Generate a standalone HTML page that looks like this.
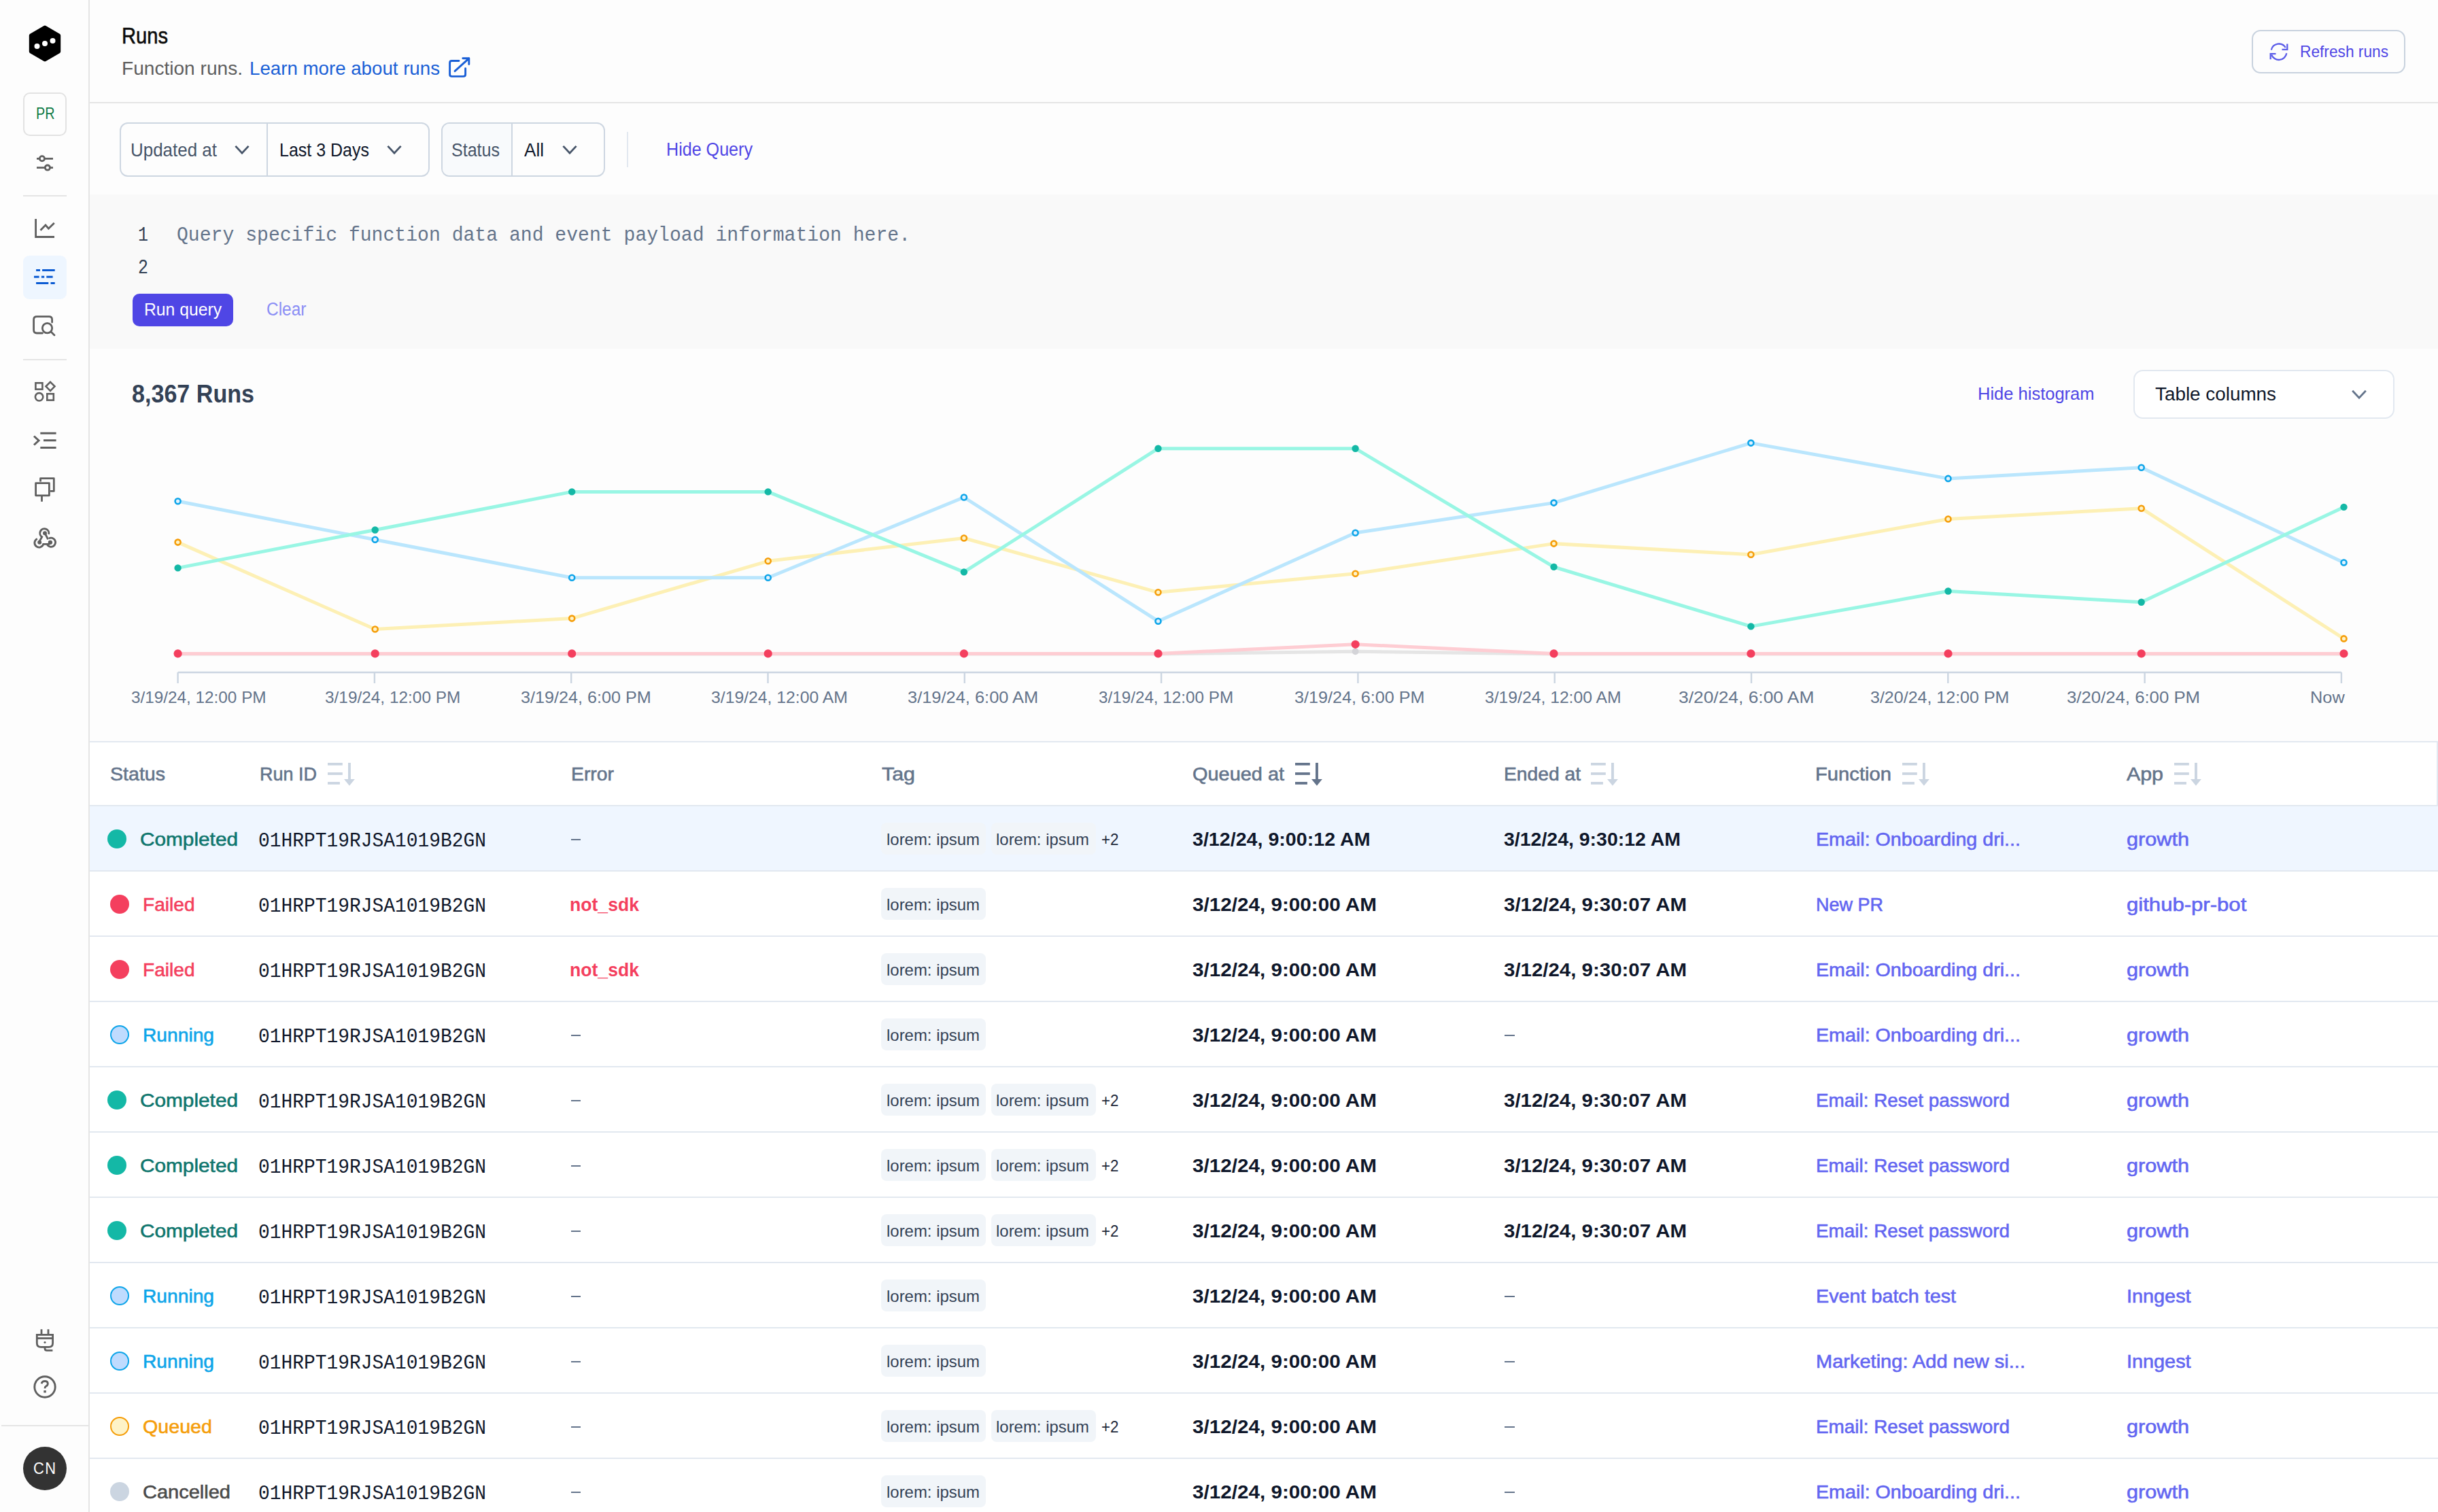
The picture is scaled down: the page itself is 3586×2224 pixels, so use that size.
<!DOCTYPE html>
<html><head><meta charset="utf-8"><title>Runs</title>
<style>
html,body{margin:0;padding:0;overflow:hidden;background:#fdfdfd;}
#root{position:absolute;left:0;top:0;width:3586px;height:2224px;overflow:hidden;background:#fdfdfd;font-family:'Liberation Sans', sans-serif;}
svg{overflow:visible;}
</style></head><body>
<div id="root">
<div style="position:absolute;left:0px;top:0px;width:130px;height:2224px;background:#fdfdfd;"></div>
<div style="position:absolute;left:130px;top:0px;width:2px;height:2224px;background:#e5e5e5;"></div>
<div style="position:absolute;left:132px;top:150px;width:3454px;height:2px;background:#e5e5e5;"></div>
<div style="position:absolute;left:132px;top:286px;width:3454px;height:227px;background:#f9f9f9;"></div>
<div style="position:absolute;left:132px;top:1092px;width:3454px;height:1132px;background:#ffffff;"></div>
<svg style="position:absolute;left:30px;top:30px;" width="72" height="72" viewBox="30 30 72 72"><path d="M66 40.6 L86.2 52.3 L86.2 75.7 L66 87.4 L45.8 75.7 L45.8 52.3 Z" fill="#000" stroke="#000" stroke-width="6" stroke-linejoin="round"/><circle cx="54.5" cy="68" r="4" fill="#fff"/><circle cx="66" cy="64" r="4" fill="#fff"/><circle cx="77.5" cy="60" r="4" fill="#fff"/></svg>
<div style="position:absolute;left:34px;top:136px;width:64px;height:64px;box-sizing:border-box;border:2px solid #e2e2e2;border-radius:10px;background:#fdfdfd;"></div>
<div id="t0" style="position:absolute;left:52.5px;top:155.3px;font-family:'Liberation Sans', sans-serif;font-size:24.5px;line-height:24.5px;color:#0f7b45;font-weight:400;white-space:pre;transform:scaleX(0.8077);transform-origin:0 0;">PR</div>
<svg style="position:absolute;left:40px;top:215px;" width="50" height="50" viewBox="40 215 50 50"><g stroke="#5f5f5f" stroke-width="2.8" fill="none"><path d="M54 233.3 H58.2 M65.6 233.3 H78"/><circle cx="61.9" cy="233.3" r="3.6"/><path d="M54 246.6 H66.2 M73.6 246.6 H78"/><circle cx="69.9" cy="246.6" r="3.6"/></g></svg>
<div style="position:absolute;left:34px;top:287px;width:64px;height:2px;background:#e5e5e5;"></div>
<svg style="position:absolute;left:40px;top:315px;" width="50" height="45" viewBox="40 315 50 45"><g stroke="#5f5f5f" stroke-width="2.8" fill="none"><path d="M52.6 322 V348.5 H80"/><path d="M59.5 338.8 L67 331 L71.4 336.2 L79.8 328"/></g></svg>
<div style="position:absolute;left:34px;top:376px;width:64px;height:64px;background:#eef6ff;border-radius:9px;"></div>
<svg style="position:absolute;left:40px;top:385px;" width="50" height="45" viewBox="40 385 50 45"><g stroke="#0b5bd3" stroke-width="2.9" fill="none"><path d="M53.1 397.5 H59 M62.1 397.5 H80.7"/><path d="M50 407.2 H57.6 M60.9 407.2 H65.2 M68.3 407.2 H77.6"/><path d="M53.1 416.5 H71.3 M74.5 416.5 H80.7"/></g></svg>
<svg style="position:absolute;left:40px;top:455px;" width="50" height="50" viewBox="40 455 50 50"><g stroke="#5f5f5f" stroke-width="2.8" fill="none" stroke-linecap="round"><path d="M62.5 490 H54 Q49.6 490 49.6 485.6 V469.9 Q49.6 465.6 54 465.6 H72.2 Q76.6 465.6 76.6 469.9 V474"/><circle cx="69.5" cy="482.6" r="7.2"/><path d="M75 488 L80 493"/></g></svg>
<div style="position:absolute;left:34px;top:528px;width:64px;height:2px;background:#e5e5e5;"></div>
<svg style="position:absolute;left:40px;top:550px;" width="50" height="50" viewBox="40 550 50 50"><g stroke="#5f5f5f" stroke-width="2.6" fill="none"><rect x="52.4" y="563.3" width="10" height="9.3"/><path d="M74 561.8 L80.5 568.3 L74 574.8 L67.5 568.3 Z"/><circle cx="57.6" cy="583.8" r="5.7"/><rect x="69.3" y="579.3" width="9.5" height="9.3"/></g></svg>
<svg style="position:absolute;left:40px;top:625px;" width="50" height="45" viewBox="40 625 50 45"><g stroke="#5f5f5f" stroke-width="3" fill="none"><path d="M50 641.5 L57 648 L50 654.5"/><path d="M59.3 637.2 H82.6 M64 647.8 H82.6 M59.3 658.4 H82.6"/></g></svg>
<svg style="position:absolute;left:40px;top:695px;" width="50" height="50" viewBox="40 695 50 50"><g stroke="#5f5f5f" stroke-width="2.8" fill="none" stroke-linejoin="round"><path d="M59.5 708.5 V703.7 H79.3 V722.4 H74"/><rect x="52.6" y="710.6" width="19.8" height="18.2"/><path d="M61.5 729 V737.8"/></g></svg>
<svg style="position:absolute;left:40px;top:765px;" width="55" height="50" viewBox="40 765 55 50"><g transform="translate(66 791.5) scale(0.9) translate(-66 -791.5)"><g stroke="#5f5f5f" stroke-width="3.2" fill="none"><path d="M72.3 785.2 A7.3 7.3 0 1 0 61.2 789.5 L56.5 798"/><path d="M53.6 792.6 A7.3 7.3 0 1 0 63.5 801.4 H74"/><path d="M66 783.4 L71.2 793.6"/><path d="M69.8 802.3 A7.3 7.3 0 1 0 72.6 792"/></g><g fill="#5f5f5f"><circle cx="66" cy="783.4" r="3.3"/><circle cx="57.3" cy="798.5" r="3.3"/><circle cx="74.8" cy="798.5" r="3.5"/></g></g></svg>
<svg style="position:absolute;left:40px;top:1945px;" width="50" height="50" viewBox="40 1945 50 50"><g stroke="#5f5f5f" stroke-width="2.8" fill="none"><path d="M61 1955.3 V1962.2 M71 1955.3 V1962.2"/><path d="M54.3 1963.4 H77.6 V1975.5 Q77.6 1981.4 71.7 1981.4 H60.2 Q54.3 1981.4 54.3 1975.5 Z"/><path d="M54.3 1968.5 H77.6"/><path d="M66 1981.4 V1983.5 Q66 1986.3 68.8 1986.3 H77.4"/></g><circle cx="66" cy="1974.5" r="1.6" fill="#5f5f5f"/></svg>
<svg style="position:absolute;left:40px;top:2015px;" width="55" height="55" viewBox="40 2015 55 55"><circle cx="66" cy="2040" r="15.2" stroke="#5f5f5f" stroke-width="2.9" fill="none"/><path d="M61.2 2035.2 Q61.8 2031.5 66 2031.5 Q70.3 2031.5 70.3 2035.2 Q70.3 2037.7 67.6 2039 Q66 2039.8 66 2042.2" stroke="#5f5f5f" stroke-width="2.9" fill="none"/><rect x="64.3" y="2045.2" width="3.5" height="3.3" fill="#5f5f5f"/></svg>
<div style="position:absolute;left:2px;top:2096px;width:128px;height:2px;background:#e5e5e5;"></div>
<div style="position:absolute;left:34px;top:2128px;width:64px;height:64px;background:#333;border-radius:50%;"></div>
<div id="t1" style="position:absolute;left:48.5px;top:2148.7px;font-family:'Liberation Sans', sans-serif;font-size:23px;line-height:23px;color:#fff;font-weight:400;white-space:pre;transform:scaleX(0.9521);transform-origin:0 0;letter-spacing:1.5px;">CN</div>
<div id="t2" style="position:absolute;left:179.0px;top:35.8px;font-family:'Liberation Sans', sans-serif;font-size:33px;line-height:33px;color:#0b0b0b;font-weight:400;white-space:pre;transform:scaleX(0.8826);transform-origin:0 0;-webkit-text-stroke:0.6px #0b0b0b;">Runs</div>
<div id="t3" style="position:absolute;left:179.0px;top:86.7px;font-family:'Liberation Sans', sans-serif;font-size:28px;line-height:28px;color:#5e5e5e;font-weight:400;white-space:pre;transform:scaleX(1.0033);transform-origin:0 0;">Function runs.</div>
<div id="t4" style="position:absolute;left:366.5px;top:86.7px;font-family:'Liberation Sans', sans-serif;font-size:28px;line-height:28px;color:#1a5fd6;font-weight:400;white-space:pre;transform:scaleX(0.9884);transform-origin:0 0;">Learn more about runs</div>
<svg style="position:absolute;left:655px;top:80px;" width="40" height="40" viewBox="655 80 40 40"><g stroke="#1a5fd6" stroke-width="2.9" fill="none" stroke-linecap="round" stroke-linejoin="round"><path d="M675 89.5 H664.5 Q661.6 89.5 661.6 92.4 V109.5 Q661.6 112.4 664.5 112.4 H681.6 Q684.6 112.4 684.6 109.5 V100.6"/><path d="M669 104.6 L689.8 85.8 M680.8 85.8 H689.8 V94.6"/></g></svg>
<div style="position:absolute;left:3312px;top:44px;width:226px;height:64px;box-sizing:border-box;border:2px solid #c8d2de;border-radius:13px;"></div>
<svg style="position:absolute;left:3330px;top:55px;" width="45" height="45" viewBox="3330 55 45 45"><g stroke="#5b5ce8" stroke-width="2.3" fill="none"><path d="M3340.8 73.5 A11.5 11.5 0 0 1 3361.8 70"/><path d="M3363.3 78.3 A11.5 11.5 0 0 1 3341.2 80.6"/><path d="M3356.5 72.9 H3364.3 V64.6"/><path d="M3347.5 79.2 H3339.7 V87.2"/></g></svg>
<div id="t5" style="position:absolute;left:3382.5px;top:63.5px;font-family:'Liberation Sans', sans-serif;font-size:24px;line-height:24px;color:#4f46e5;font-weight:400;white-space:pre;transform:scaleX(0.9462);transform-origin:0 0;">Refresh runs</div>
<div style="position:absolute;left:176px;top:180px;width:456px;height:80px;box-sizing:border-box;border:2px solid #cdd6e1;border-radius:12px;"></div>
<div style="position:absolute;left:392px;top:182px;width:2px;height:76px;background:#cdd6e1;"></div>
<div id="t6" style="position:absolute;left:192.0px;top:207.3px;font-family:'Liberation Sans', sans-serif;font-size:28px;line-height:28px;color:#475569;font-weight:400;white-space:pre;transform:scaleX(0.9270);transform-origin:0 0;">Updated at</div>
<svg style="position:absolute;left:342.3px;top:208.2px;" width="28" height="24" viewBox="342.3 208.2 28 24"><path d="M346.7 215.1 L356.3 225.3 L365.9 215.1" stroke="#475569" stroke-width="2.8" fill="none"/></svg>
<div id="t7" style="position:absolute;left:410.5px;top:207.3px;font-family:'Liberation Sans', sans-serif;font-size:28px;line-height:28px;color:#0f172a;font-weight:400;white-space:pre;transform:scaleX(0.8927);transform-origin:0 0;">Last 3 Days</div>
<svg style="position:absolute;left:566px;top:208.2px;" width="28" height="24" viewBox="566 208.2 28 24"><path d="M570.4 215.1 L580.0 225.3 L589.6 215.1" stroke="#475569" stroke-width="2.8" fill="none"/></svg>
<div style="position:absolute;left:649px;top:180px;width:241px;height:80px;box-sizing:border-box;border:2px solid #cdd6e1;border-radius:12px;overflow:hidden;"></div>
<div style="position:absolute;left:651px;top:182px;width:102px;height:76px;background:#f8fafc;border-radius:10px 0 0 10px;"></div>
<div style="position:absolute;left:752px;top:182px;width:2px;height:76px;background:#cdd6e1;"></div>
<div id="t8" style="position:absolute;left:664.0px;top:207.3px;font-family:'Liberation Sans', sans-serif;font-size:28px;line-height:28px;color:#475569;font-weight:400;white-space:pre;transform:scaleX(0.8943);transform-origin:0 0;">Status</div>
<div id="t9" style="position:absolute;left:770.5px;top:207.3px;font-family:'Liberation Sans', sans-serif;font-size:28px;line-height:28px;color:#0f172a;font-weight:400;white-space:pre;transform:scaleX(0.9317);transform-origin:0 0;">All</div>
<svg style="position:absolute;left:824px;top:208.2px;" width="28" height="24" viewBox="824 208.2 28 24"><path d="M828.4 215.1 L838.0 225.3 L847.6 215.1" stroke="#475569" stroke-width="2.8" fill="none"/></svg>
<div style="position:absolute;left:922px;top:194px;width:2px;height:52px;background:#e2e8f0;"></div>
<div id="t10" style="position:absolute;left:979.5px;top:206.8px;font-family:'Liberation Sans', sans-serif;font-size:27px;line-height:27px;color:#5046e5;font-weight:400;white-space:pre;transform:scaleX(0.9300);transform-origin:0 0;">Hide Query</div>
<div id="t11" style="position:absolute;left:203.0px;top:331.0px;font-family:'Liberation Mono', monospace;font-size:30px;line-height:30px;color:#334155;font-weight:400;white-space:pre;transform:scaleX(0.8326);transform-origin:0 0;">1</div>
<div id="t12" style="position:absolute;left:259.5px;top:331.0px;font-family:'Liberation Mono', monospace;font-size:30px;line-height:30px;color:#64748b;font-weight:400;white-space:pre;transform:scaleX(0.9365);transform-origin:0 0;">Query specific function data and event payload information here.</div>
<div id="t13" style="position:absolute;left:203.0px;top:379.3px;font-family:'Liberation Mono', monospace;font-size:30px;line-height:30px;color:#334155;font-weight:400;white-space:pre;transform:scaleX(0.8326);transform-origin:0 0;">2</div>
<div style="position:absolute;left:195px;top:432px;width:148px;height:48px;background:#4f46e5;border-radius:10px;"></div>
<div id="t14" style="position:absolute;left:212.0px;top:442.2px;font-family:'Liberation Sans', sans-serif;font-size:26px;line-height:26px;color:#ffffff;font-weight:400;white-space:pre;transform:scaleX(0.9502);transform-origin:0 0;">Run query</div>
<div id="t15" style="position:absolute;left:392.0px;top:441.8px;font-family:'Liberation Sans', sans-serif;font-size:27px;line-height:27px;color:#8b8ff5;font-weight:400;white-space:pre;transform:scaleX(0.9065);transform-origin:0 0;">Clear</div>
<div id="t16" style="position:absolute;left:194.0px;top:561.3px;font-family:'Liberation Sans', sans-serif;font-size:37px;line-height:37px;color:#334155;font-weight:700;white-space:pre;transform:scaleX(0.9213);transform-origin:0 0;">8,367 Runs</div>
<div id="t17" style="position:absolute;left:2909.0px;top:566.4px;font-family:'Liberation Sans', sans-serif;font-size:26px;line-height:26px;color:#4f46e5;font-weight:400;white-space:pre;transform:scaleX(0.9808);transform-origin:0 0;">Hide histogram</div>
<div style="position:absolute;left:3138px;top:544px;width:384px;height:72px;box-sizing:border-box;border:2px solid #e2e8f0;border-radius:14px;background:#fff;"></div>
<div id="t18" style="position:absolute;left:3169.5px;top:567.4px;font-family:'Liberation Sans', sans-serif;font-size:27px;line-height:27px;color:#0f172a;font-weight:400;white-space:pre;transform:scaleX(1.0313);transform-origin:0 0;">Table columns</div>
<svg style="position:absolute;left:3455.5px;top:568px;" width="28" height="24" viewBox="3455.5 568 28 24"><path d="M3459.7 574.8 L3469.5 585.2 L3479.3 574.8" stroke="#64748b" stroke-width="2.8" fill="none"/></svg>
<svg style="position:absolute;left:200px;top:600px;" width="3300" height="420" viewBox="200 600 3300 420"><path d="M261.6 989 H3444" stroke="#cbd5e1" stroke-width="2.4" fill="none"/><path d="M261.6 989 V1005" stroke="#cbd5e1" stroke-width="2.4"/><path d="M550.9 989 V1005" stroke="#cbd5e1" stroke-width="2.4"/><path d="M840.2 989 V1005" stroke="#cbd5e1" stroke-width="2.4"/><path d="M1129.5 989 V1005" stroke="#cbd5e1" stroke-width="2.4"/><path d="M1418.8 989 V1005" stroke="#cbd5e1" stroke-width="2.4"/><path d="M1708.1 989 V1005" stroke="#cbd5e1" stroke-width="2.4"/><path d="M1997.4 989 V1005" stroke="#cbd5e1" stroke-width="2.4"/><path d="M2286.7 989 V1005" stroke="#cbd5e1" stroke-width="2.4"/><path d="M2576.0 989 V1005" stroke="#cbd5e1" stroke-width="2.4"/><path d="M2865.3 989 V1005" stroke="#cbd5e1" stroke-width="2.4"/><path d="M3154.6 989 V1005" stroke="#cbd5e1" stroke-width="2.4"/><path d="M3443.9 989 V1005" stroke="#cbd5e1" stroke-width="2.4"/><polyline points="261.6,962.0 551.7,962.0 841.2,962.0 1129.7,962.0 1417.9,962.0 1703.5,962.0 1993.6,958.3 2285.5,962.0 2575.4,962.0 2865.5,962.0 3149.7,962.0 3447.5,962.0" stroke="#e5e5e5" stroke-width="5" fill="none" stroke-linejoin="round"/><polyline points="261.6,961.4 551.7,961.4 841.2,961.4 1129.7,961.4 1417.9,961.4 1703.5,961.4 1993.6,947.8 2285.5,961.4 2575.4,961.4 2865.5,961.4 3149.7,961.4 3447.5,961.4" stroke="#fecdd3" stroke-width="5" fill="none" stroke-linejoin="round"/><polyline points="261.6,797.6 551.7,925.5 841.2,909.6 1129.7,825.3 1417.9,791.5 1703.5,871.3 1993.6,843.8 2285.5,799.6 2575.4,815.8 2865.5,763.5 3149.7,747.7 3447.5,939.4" stroke="#fdf0b5" stroke-width="5" fill="none" stroke-linejoin="round"/><polyline points="261.6,737.3 551.7,793.8 841.2,849.8 1129.7,849.8 1417.9,731.5 1703.5,913.7 1993.6,783.8 2285.5,739.6 2575.4,651.6 2865.5,703.9 3149.7,687.7 3447.5,827.5" stroke="#bae6fd" stroke-width="5" fill="none" stroke-linejoin="round"/><polyline points="261.6,835.4 551.7,779.5 841.2,723.4 1129.7,723.4 1417.9,841.4 1703.5,659.7 1993.6,659.7 2285.5,833.9 2575.4,921.4 2865.5,869.5 3149.7,885.7 3447.5,745.9" stroke="#99f6e4" stroke-width="5" fill="none" stroke-linejoin="round"/><circle cx="261.6" cy="962.0" r="4.9" fill="#d4d4d8"/><circle cx="551.7" cy="962.0" r="4.9" fill="#d4d4d8"/><circle cx="841.2" cy="962.0" r="4.9" fill="#d4d4d8"/><circle cx="1129.7" cy="962.0" r="4.9" fill="#d4d4d8"/><circle cx="1417.9" cy="962.0" r="4.9" fill="#d4d4d8"/><circle cx="1703.5" cy="962.0" r="4.9" fill="#d4d4d8"/><circle cx="1993.6" cy="958.3" r="4.9" fill="#d4d4d8"/><circle cx="2285.5" cy="962.0" r="4.9" fill="#d4d4d8"/><circle cx="2575.4" cy="962.0" r="4.9" fill="#d4d4d8"/><circle cx="2865.5" cy="962.0" r="4.9" fill="#d4d4d8"/><circle cx="3149.7" cy="962.0" r="4.9" fill="#d4d4d8"/><circle cx="3447.5" cy="962.0" r="4.9" fill="#d4d4d8"/><circle cx="261.6" cy="961.4" r="6.1" fill="#f43f5e"/><circle cx="551.7" cy="961.4" r="6.1" fill="#f43f5e"/><circle cx="841.2" cy="961.4" r="6.1" fill="#f43f5e"/><circle cx="1129.7" cy="961.4" r="6.1" fill="#f43f5e"/><circle cx="1417.9" cy="961.4" r="6.1" fill="#f43f5e"/><circle cx="1703.5" cy="961.4" r="6.1" fill="#f43f5e"/><circle cx="1993.6" cy="947.8" r="6.1" fill="#f43f5e"/><circle cx="2285.5" cy="961.4" r="6.1" fill="#f43f5e"/><circle cx="2575.4" cy="961.4" r="6.1" fill="#f43f5e"/><circle cx="2865.5" cy="961.4" r="6.1" fill="#f43f5e"/><circle cx="3149.7" cy="961.4" r="6.1" fill="#f43f5e"/><circle cx="3447.5" cy="961.4" r="6.1" fill="#f43f5e"/><circle cx="261.6" cy="797.6" r="4.0" fill="#fef3c7" stroke="#f59e0b" stroke-width="2.6"/><circle cx="551.7" cy="925.5" r="4.0" fill="#fef3c7" stroke="#f59e0b" stroke-width="2.6"/><circle cx="841.2" cy="909.6" r="4.0" fill="#fef3c7" stroke="#f59e0b" stroke-width="2.6"/><circle cx="1129.7" cy="825.3" r="4.0" fill="#fef3c7" stroke="#f59e0b" stroke-width="2.6"/><circle cx="1417.9" cy="791.5" r="4.0" fill="#fef3c7" stroke="#f59e0b" stroke-width="2.6"/><circle cx="1703.5" cy="871.3" r="4.0" fill="#fef3c7" stroke="#f59e0b" stroke-width="2.6"/><circle cx="1993.6" cy="843.8" r="4.0" fill="#fef3c7" stroke="#f59e0b" stroke-width="2.6"/><circle cx="2285.5" cy="799.6" r="4.0" fill="#fef3c7" stroke="#f59e0b" stroke-width="2.6"/><circle cx="2575.4" cy="815.8" r="4.0" fill="#fef3c7" stroke="#f59e0b" stroke-width="2.6"/><circle cx="2865.5" cy="763.5" r="4.0" fill="#fef3c7" stroke="#f59e0b" stroke-width="2.6"/><circle cx="3149.7" cy="747.7" r="4.0" fill="#fef3c7" stroke="#f59e0b" stroke-width="2.6"/><circle cx="3447.5" cy="939.4" r="4.0" fill="#fef3c7" stroke="#f59e0b" stroke-width="2.6"/><circle cx="261.6" cy="737.3" r="4.0" fill="#e0f2fe" stroke="#0ea5e9" stroke-width="2.6"/><circle cx="551.7" cy="793.8" r="4.0" fill="#e0f2fe" stroke="#0ea5e9" stroke-width="2.6"/><circle cx="841.2" cy="849.8" r="4.0" fill="#e0f2fe" stroke="#0ea5e9" stroke-width="2.6"/><circle cx="1129.7" cy="849.8" r="4.0" fill="#e0f2fe" stroke="#0ea5e9" stroke-width="2.6"/><circle cx="1417.9" cy="731.5" r="4.0" fill="#e0f2fe" stroke="#0ea5e9" stroke-width="2.6"/><circle cx="1703.5" cy="913.7" r="4.0" fill="#e0f2fe" stroke="#0ea5e9" stroke-width="2.6"/><circle cx="1993.6" cy="783.8" r="4.0" fill="#e0f2fe" stroke="#0ea5e9" stroke-width="2.6"/><circle cx="2285.5" cy="739.6" r="4.0" fill="#e0f2fe" stroke="#0ea5e9" stroke-width="2.6"/><circle cx="2575.4" cy="651.6" r="4.0" fill="#e0f2fe" stroke="#0ea5e9" stroke-width="2.6"/><circle cx="2865.5" cy="703.9" r="4.0" fill="#e0f2fe" stroke="#0ea5e9" stroke-width="2.6"/><circle cx="3149.7" cy="687.7" r="4.0" fill="#e0f2fe" stroke="#0ea5e9" stroke-width="2.6"/><circle cx="3447.5" cy="827.5" r="4.0" fill="#e0f2fe" stroke="#0ea5e9" stroke-width="2.6"/><circle cx="261.6" cy="835.4" r="5.2" fill="#14b8a6"/><circle cx="551.7" cy="779.5" r="5.2" fill="#14b8a6"/><circle cx="841.2" cy="723.4" r="5.2" fill="#14b8a6"/><circle cx="1129.7" cy="723.4" r="5.2" fill="#14b8a6"/><circle cx="1417.9" cy="841.4" r="5.2" fill="#14b8a6"/><circle cx="1703.5" cy="659.7" r="5.2" fill="#14b8a6"/><circle cx="1993.6" cy="659.7" r="5.2" fill="#14b8a6"/><circle cx="2285.5" cy="833.9" r="5.2" fill="#14b8a6"/><circle cx="2575.4" cy="921.4" r="5.2" fill="#14b8a6"/><circle cx="2865.5" cy="869.5" r="5.2" fill="#14b8a6"/><circle cx="3149.7" cy="885.7" r="5.2" fill="#14b8a6"/><circle cx="3447.5" cy="745.9" r="5.2" fill="#14b8a6"/></svg>
<div id="t19" style="position:absolute;left:193.4px;top:1013.9px;font-family:'Liberation Sans', sans-serif;font-size:24px;line-height:24px;color:#64748b;font-weight:400;white-space:pre;transform:scaleX(1.0125);transform-origin:0 0;">3/19/24, 12:00 PM</div>
<div id="t20" style="position:absolute;left:477.7px;top:1013.9px;font-family:'Liberation Sans', sans-serif;font-size:24px;line-height:24px;color:#64748b;font-weight:400;white-space:pre;transform:scaleX(1.0161);transform-origin:0 0;">3/19/24, 12:00 PM</div>
<div id="t21" style="position:absolute;left:765.7px;top:1013.9px;font-family:'Liberation Sans', sans-serif;font-size:24px;line-height:24px;color:#64748b;font-weight:400;white-space:pre;transform:scaleX(1.0493);transform-origin:0 0;">3/19/24, 6:00 PM</div>
<div id="t22" style="position:absolute;left:1045.7px;top:1013.9px;font-family:'Liberation Sans', sans-serif;font-size:24px;line-height:24px;color:#64748b;font-weight:400;white-space:pre;transform:scaleX(1.0312);transform-origin:0 0;">3/19/24, 12:00 AM</div>
<div id="t23" style="position:absolute;left:1334.7px;top:1013.9px;font-family:'Liberation Sans', sans-serif;font-size:24px;line-height:24px;color:#64748b;font-weight:400;white-space:pre;transform:scaleX(1.0591);transform-origin:0 0;">3/19/24, 6:00 AM</div>
<div id="t24" style="position:absolute;left:1615.9px;top:1013.9px;font-family:'Liberation Sans', sans-serif;font-size:24px;line-height:24px;color:#64748b;font-weight:400;white-space:pre;transform:scaleX(1.0100);transform-origin:0 0;">3/19/24, 12:00 PM</div>
<div id="t25" style="position:absolute;left:1903.7px;top:1013.9px;font-family:'Liberation Sans', sans-serif;font-size:24px;line-height:24px;color:#64748b;font-weight:400;white-space:pre;transform:scaleX(1.0476);transform-origin:0 0;">3/19/24, 6:00 PM</div>
<div id="t26" style="position:absolute;left:2184.4px;top:1013.9px;font-family:'Liberation Sans', sans-serif;font-size:24px;line-height:24px;color:#64748b;font-weight:400;white-space:pre;transform:scaleX(1.0292);transform-origin:0 0;">3/19/24, 12:00 AM</div>
<div id="t27" style="position:absolute;left:2469.0px;top:1013.9px;font-family:'Liberation Sans', sans-serif;font-size:24px;line-height:24px;color:#64748b;font-weight:400;white-space:pre;transform:scaleX(1.0988);transform-origin:0 0;">3/20/24, 6:00 AM</div>
<div id="t28" style="position:absolute;left:2751.0px;top:1013.9px;font-family:'Liberation Sans', sans-serif;font-size:24px;line-height:24px;color:#64748b;font-weight:400;white-space:pre;transform:scaleX(1.0421);transform-origin:0 0;">3/20/24, 12:00 PM</div>
<div id="t29" style="position:absolute;left:3040.0px;top:1013.9px;font-family:'Liberation Sans', sans-serif;font-size:24px;line-height:24px;color:#64748b;font-weight:400;white-space:pre;transform:scaleX(1.0722);transform-origin:0 0;">3/20/24, 6:00 PM</div>
<div id="t30" style="position:absolute;left:3397.8px;top:1013.9px;font-family:'Liberation Sans', sans-serif;font-size:24px;line-height:24px;color:#64748b;font-weight:400;white-space:pre;transform:scaleX(1.0559);transform-origin:0 0;">Now</div>
<div style="position:absolute;left:132px;top:1090px;width:3454px;height:2px;background:#e2e8f0;"></div>
<div style="position:absolute;left:132px;top:1184px;width:3454px;height:2px;background:#e2e8f0;"></div>
<div style="position:absolute;left:3584px;top:1090px;width:2px;height:96px;background:#e2e8f0;"></div>
<div id="t31" style="position:absolute;left:161.5px;top:1124.8px;font-family:'Liberation Sans', sans-serif;font-size:28px;line-height:28px;color:#64748b;font-weight:400;white-space:pre;transform:scaleX(1.0203);transform-origin:0 0;-webkit-text-stroke:0.6px #64748b;">Status</div>
<div id="t32" style="position:absolute;left:382.0px;top:1124.8px;font-family:'Liberation Sans', sans-serif;font-size:28px;line-height:28px;color:#64748b;font-weight:400;white-space:pre;transform:scaleX(0.9638);transform-origin:0 0;-webkit-text-stroke:0.6px #64748b;">Run ID</div>
<div id="t33" style="position:absolute;left:839.5px;top:1124.8px;font-family:'Liberation Sans', sans-serif;font-size:28px;line-height:28px;color:#64748b;font-weight:400;white-space:pre;transform:scaleX(1.0123);transform-origin:0 0;-webkit-text-stroke:0.6px #64748b;">Error</div>
<div id="t34" style="position:absolute;left:1296.5px;top:1124.8px;font-family:'Liberation Sans', sans-serif;font-size:28px;line-height:28px;color:#64748b;font-weight:400;white-space:pre;transform:scaleX(1.0851);transform-origin:0 0;-webkit-text-stroke:0.6px #64748b;">Tag</div>
<div id="t35" style="position:absolute;left:1754.0px;top:1124.8px;font-family:'Liberation Sans', sans-serif;font-size:28px;line-height:28px;color:#64748b;font-weight:400;white-space:pre;transform:scaleX(1.0323);transform-origin:0 0;-webkit-text-stroke:0.6px #64748b;">Queued at</div>
<div id="t36" style="position:absolute;left:2212.0px;top:1124.8px;font-family:'Liberation Sans', sans-serif;font-size:28px;line-height:28px;color:#64748b;font-weight:400;white-space:pre;transform:scaleX(1.0079);transform-origin:0 0;-webkit-text-stroke:0.6px #64748b;">Ended at</div>
<div id="t37" style="position:absolute;left:2670.0px;top:1124.8px;font-family:'Liberation Sans', sans-serif;font-size:28px;line-height:28px;color:#64748b;font-weight:400;white-space:pre;transform:scaleX(1.0428);transform-origin:0 0;-webkit-text-stroke:0.6px #64748b;">Function</div>
<div id="t38" style="position:absolute;left:3127.5px;top:1124.8px;font-family:'Liberation Sans', sans-serif;font-size:28px;line-height:28px;color:#64748b;font-weight:400;white-space:pre;transform:scaleX(1.0837);transform-origin:0 0;-webkit-text-stroke:0.6px #64748b;">App</div>
<svg style="position:absolute;left:477px;top:1115px;" width="50" height="46" viewBox="477 1115 50 46"><g fill="#cbd5e1"><rect x="482" y="1122" width="21.8" height="3.8"/><rect x="482" y="1136.1" width="21.8" height="3.8"/><rect x="482" y="1150.1" width="17.9" height="3.8"/><rect x="512" y="1122" width="3.9" height="25"/><path d="M506 1146 H521.9 L513.95 1155.7 Z"/></g></svg>
<svg style="position:absolute;left:1900px;top:1115px;" width="50" height="46" viewBox="1900 1115 50 46"><g fill="#64748b"><rect x="1905" y="1122" width="21.8" height="3.8"/><rect x="1905" y="1136.1" width="21.8" height="3.8"/><rect x="1905" y="1150.1" width="17.9" height="3.8"/><rect x="1935" y="1122" width="3.9" height="25"/><path d="M1929 1146 H1944.9 L1936.95 1155.7 Z"/></g></svg>
<svg style="position:absolute;left:2335px;top:1115px;" width="50" height="46" viewBox="2335 1115 50 46"><g fill="#cbd5e1"><rect x="2340" y="1122" width="21.8" height="3.8"/><rect x="2340" y="1136.1" width="21.8" height="3.8"/><rect x="2340" y="1150.1" width="17.9" height="3.8"/><rect x="2370" y="1122" width="3.9" height="25"/><path d="M2364 1146 H2379.9 L2371.95 1155.7 Z"/></g></svg>
<svg style="position:absolute;left:2793px;top:1115px;" width="50" height="46" viewBox="2793 1115 50 46"><g fill="#cbd5e1"><rect x="2798" y="1122" width="21.8" height="3.8"/><rect x="2798" y="1136.1" width="21.8" height="3.8"/><rect x="2798" y="1150.1" width="17.9" height="3.8"/><rect x="2828" y="1122" width="3.9" height="25"/><path d="M2822 1146 H2837.9 L2829.95 1155.7 Z"/></g></svg>
<svg style="position:absolute;left:3193px;top:1115px;" width="50" height="46" viewBox="3193 1115 50 46"><g fill="#cbd5e1"><rect x="3198" y="1122" width="21.8" height="3.8"/><rect x="3198" y="1136.1" width="21.8" height="3.8"/><rect x="3198" y="1150.1" width="17.9" height="3.8"/><rect x="3228" y="1122" width="3.9" height="25"/><path d="M3222 1146 H3237.9 L3229.95 1155.7 Z"/></g></svg>
<div style="position:absolute;left:132px;top:1186px;width:3454px;height:94px;background:#eff6ff;"></div>
<div style="position:absolute;left:132px;top:1280px;width:3454px;height:2px;background:#e2e8f0;"></div>
<div style="position:absolute;left:158px;top:1220.0px;width:28px;height:28px;border-radius:50%;background:#14b8a6;"></div>
<div id="t39" style="position:absolute;left:205.6px;top:1220.8px;font-family:'Liberation Sans', sans-serif;font-size:28px;line-height:28px;color:#0f766e;font-weight:400;white-space:pre;transform:scaleX(1.0635);transform-origin:0 0;-webkit-text-stroke:0.6px #0f766e;">Completed</div>
<div id="t40" style="position:absolute;left:380.0px;top:1221.5px;font-family:'Liberation Mono', monospace;font-size:30px;line-height:30px;color:#0f172a;font-weight:400;white-space:pre;transform:scaleX(0.9304);transform-origin:0 0;">01HRPT19RJSA1019B2GN</div>
<div style="position:absolute;left:839.6px;top:1233.5px;width:14.8px;height:2.6px;background:#64748b;"></div>
<div style="position:absolute;left:1296.4px;top:1209.9px;width:153.3px;height:47.6px;background:#f1f5f9;border-radius:8px;"></div>
<div id="t41" style="position:absolute;left:1304.0px;top:1222.7px;font-family:'Liberation Sans', sans-serif;font-size:24px;line-height:24px;color:#334155;font-weight:400;white-space:pre;transform:scaleX(0.9973);transform-origin:0 0;">lorem: ipsum</div>
<div style="position:absolute;left:1458px;top:1209.9px;width:153.6px;height:47.6px;background:#f1f5f9;border-radius:8px;"></div>
<div id="t42" style="position:absolute;left:1465.4px;top:1222.7px;font-family:'Liberation Sans', sans-serif;font-size:24px;line-height:24px;color:#334155;font-weight:400;white-space:pre;transform:scaleX(0.9973);transform-origin:0 0;">lorem: ipsum</div>
<div id="t43" style="position:absolute;left:1619.5px;top:1222.7px;font-family:'Liberation Sans', sans-serif;font-size:24px;line-height:24px;color:#1e293b;font-weight:400;white-space:pre;transform:scaleX(0.9315);transform-origin:0 0;">+2</div>
<div id="t44" style="position:absolute;left:1754.0px;top:1220.8px;font-family:'Liberation Sans', sans-serif;font-size:28px;line-height:28px;color:#0f172a;font-weight:700;white-space:pre;transform:scaleX(1.0224);transform-origin:0 0;">3/12/24, 9:00:12 AM</div>
<div id="t45" style="position:absolute;left:2212.0px;top:1220.8px;font-family:'Liberation Sans', sans-serif;font-size:28px;line-height:28px;color:#0f172a;font-weight:700;white-space:pre;transform:scaleX(1.0165);transform-origin:0 0;">3/12/24, 9:30:12 AM</div>
<div id="t46" style="position:absolute;left:2670.7px;top:1220.8px;font-family:'Liberation Sans', sans-serif;font-size:28px;line-height:28px;color:#6366f1;font-weight:400;white-space:pre;transform:scaleX(1.0233);transform-origin:0 0;-webkit-text-stroke:0.6px #6366f1;">Email: Onboarding dri...</div>
<div id="t47" style="position:absolute;left:3128.0px;top:1220.8px;font-family:'Liberation Sans', sans-serif;font-size:28px;line-height:28px;color:#6366f1;font-weight:400;white-space:pre;transform:scaleX(1.0946);transform-origin:0 0;-webkit-text-stroke:0.6px #6366f1;">growth</div>
<div style="position:absolute;left:132px;top:1376px;width:3454px;height:2px;background:#e2e8f0;"></div>
<div style="position:absolute;left:162px;top:1316.0px;width:28px;height:28px;border-radius:50%;background:#f43f5e;"></div>
<div id="t48" style="position:absolute;left:210.2px;top:1316.8px;font-family:'Liberation Sans', sans-serif;font-size:28px;line-height:28px;color:#f43f5e;font-weight:400;white-space:pre;transform:scaleX(1.0031);transform-origin:0 0;-webkit-text-stroke:0.6px #f43f5e;">Failed</div>
<div id="t49" style="position:absolute;left:380.0px;top:1317.5px;font-family:'Liberation Mono', monospace;font-size:30px;line-height:30px;color:#0f172a;font-weight:400;white-space:pre;transform:scaleX(0.9304);transform-origin:0 0;">01HRPT19RJSA1019B2GN</div>
<div id="t50" style="position:absolute;left:837.5px;top:1316.8px;font-family:'Liberation Sans', sans-serif;font-size:28px;line-height:28px;color:#f43f5e;font-weight:700;white-space:pre;transform:scaleX(0.9501);transform-origin:0 0;">not_sdk</div>
<div style="position:absolute;left:1296.4px;top:1305.9px;width:153.3px;height:47.6px;background:#f1f5f9;border-radius:8px;"></div>
<div id="t51" style="position:absolute;left:1304.0px;top:1318.7px;font-family:'Liberation Sans', sans-serif;font-size:24px;line-height:24px;color:#334155;font-weight:400;white-space:pre;transform:scaleX(0.9973);transform-origin:0 0;">lorem: ipsum</div>
<div id="t52" style="position:absolute;left:1754.0px;top:1316.8px;font-family:'Liberation Sans', sans-serif;font-size:28px;line-height:28px;color:#0f172a;font-weight:700;white-space:pre;transform:scaleX(1.0595);transform-origin:0 0;">3/12/24, 9:00:00 AM</div>
<div id="t53" style="position:absolute;left:2212.0px;top:1316.8px;font-family:'Liberation Sans', sans-serif;font-size:28px;line-height:28px;color:#0f172a;font-weight:700;white-space:pre;transform:scaleX(1.0517);transform-origin:0 0;">3/12/24, 9:30:07 AM</div>
<div id="t54" style="position:absolute;left:2670.7px;top:1316.8px;font-family:'Liberation Sans', sans-serif;font-size:28px;line-height:28px;color:#6366f1;font-weight:400;white-space:pre;transform:scaleX(0.9639);transform-origin:0 0;-webkit-text-stroke:0.6px #6366f1;">New PR</div>
<div id="t55" style="position:absolute;left:3128.0px;top:1316.8px;font-family:'Liberation Sans', sans-serif;font-size:28px;line-height:28px;color:#6366f1;font-weight:400;white-space:pre;transform:scaleX(1.1104);transform-origin:0 0;-webkit-text-stroke:0.6px #6366f1;">github-pr-bot</div>
<div style="position:absolute;left:132px;top:1472px;width:3454px;height:2px;background:#e2e8f0;"></div>
<div style="position:absolute;left:162px;top:1412.0px;width:28px;height:28px;border-radius:50%;background:#f43f5e;"></div>
<div id="t56" style="position:absolute;left:210.2px;top:1412.8px;font-family:'Liberation Sans', sans-serif;font-size:28px;line-height:28px;color:#f43f5e;font-weight:400;white-space:pre;transform:scaleX(1.0031);transform-origin:0 0;-webkit-text-stroke:0.6px #f43f5e;">Failed</div>
<div id="t57" style="position:absolute;left:380.0px;top:1413.5px;font-family:'Liberation Mono', monospace;font-size:30px;line-height:30px;color:#0f172a;font-weight:400;white-space:pre;transform:scaleX(0.9304);transform-origin:0 0;">01HRPT19RJSA1019B2GN</div>
<div id="t58" style="position:absolute;left:837.5px;top:1412.8px;font-family:'Liberation Sans', sans-serif;font-size:28px;line-height:28px;color:#f43f5e;font-weight:700;white-space:pre;transform:scaleX(0.9501);transform-origin:0 0;">not_sdk</div>
<div style="position:absolute;left:1296.4px;top:1401.9px;width:153.3px;height:47.6px;background:#f1f5f9;border-radius:8px;"></div>
<div id="t59" style="position:absolute;left:1304.0px;top:1414.7px;font-family:'Liberation Sans', sans-serif;font-size:24px;line-height:24px;color:#334155;font-weight:400;white-space:pre;transform:scaleX(0.9973);transform-origin:0 0;">lorem: ipsum</div>
<div id="t60" style="position:absolute;left:1754.0px;top:1412.8px;font-family:'Liberation Sans', sans-serif;font-size:28px;line-height:28px;color:#0f172a;font-weight:700;white-space:pre;transform:scaleX(1.0595);transform-origin:0 0;">3/12/24, 9:00:00 AM</div>
<div id="t61" style="position:absolute;left:2212.0px;top:1412.8px;font-family:'Liberation Sans', sans-serif;font-size:28px;line-height:28px;color:#0f172a;font-weight:700;white-space:pre;transform:scaleX(1.0517);transform-origin:0 0;">3/12/24, 9:30:07 AM</div>
<div id="t62" style="position:absolute;left:2670.7px;top:1412.8px;font-family:'Liberation Sans', sans-serif;font-size:28px;line-height:28px;color:#6366f1;font-weight:400;white-space:pre;transform:scaleX(1.0233);transform-origin:0 0;-webkit-text-stroke:0.6px #6366f1;">Email: Onboarding dri...</div>
<div id="t63" style="position:absolute;left:3128.0px;top:1412.8px;font-family:'Liberation Sans', sans-serif;font-size:28px;line-height:28px;color:#6366f1;font-weight:400;white-space:pre;transform:scaleX(1.0946);transform-origin:0 0;-webkit-text-stroke:0.6px #6366f1;">growth</div>
<div style="position:absolute;left:132px;top:1568px;width:3454px;height:2px;background:#e2e8f0;"></div>
<div style="position:absolute;left:162px;top:1508.0px;width:28px;height:28px;border-radius:50%;background:#bfdbfe;box-sizing:border-box;border:2.4px solid #0ea5e9;"></div>
<div id="t64" style="position:absolute;left:210.2px;top:1508.8px;font-family:'Liberation Sans', sans-serif;font-size:28px;line-height:28px;color:#0ea5e9;font-weight:400;white-space:pre;transform:scaleX(1.0066);transform-origin:0 0;-webkit-text-stroke:0.6px #0ea5e9;">Running</div>
<div id="t65" style="position:absolute;left:380.0px;top:1509.5px;font-family:'Liberation Mono', monospace;font-size:30px;line-height:30px;color:#0f172a;font-weight:400;white-space:pre;transform:scaleX(0.9304);transform-origin:0 0;">01HRPT19RJSA1019B2GN</div>
<div style="position:absolute;left:839.6px;top:1521.5px;width:14.8px;height:2.6px;background:#64748b;"></div>
<div style="position:absolute;left:1296.4px;top:1497.9px;width:153.3px;height:47.6px;background:#f1f5f9;border-radius:8px;"></div>
<div id="t66" style="position:absolute;left:1304.0px;top:1510.7px;font-family:'Liberation Sans', sans-serif;font-size:24px;line-height:24px;color:#334155;font-weight:400;white-space:pre;transform:scaleX(0.9973);transform-origin:0 0;">lorem: ipsum</div>
<div id="t67" style="position:absolute;left:1754.0px;top:1508.8px;font-family:'Liberation Sans', sans-serif;font-size:28px;line-height:28px;color:#0f172a;font-weight:700;white-space:pre;transform:scaleX(1.0595);transform-origin:0 0;">3/12/24, 9:00:00 AM</div>
<div style="position:absolute;left:2212.9px;top:1521.5px;width:15.4px;height:2.6px;background:#64748b;"></div>
<div id="t68" style="position:absolute;left:2670.7px;top:1508.8px;font-family:'Liberation Sans', sans-serif;font-size:28px;line-height:28px;color:#6366f1;font-weight:400;white-space:pre;transform:scaleX(1.0233);transform-origin:0 0;-webkit-text-stroke:0.6px #6366f1;">Email: Onboarding dri...</div>
<div id="t69" style="position:absolute;left:3128.0px;top:1508.8px;font-family:'Liberation Sans', sans-serif;font-size:28px;line-height:28px;color:#6366f1;font-weight:400;white-space:pre;transform:scaleX(1.0946);transform-origin:0 0;-webkit-text-stroke:0.6px #6366f1;">growth</div>
<div style="position:absolute;left:132px;top:1664px;width:3454px;height:2px;background:#e2e8f0;"></div>
<div style="position:absolute;left:158px;top:1604.0px;width:28px;height:28px;border-radius:50%;background:#14b8a6;"></div>
<div id="t70" style="position:absolute;left:205.6px;top:1604.8px;font-family:'Liberation Sans', sans-serif;font-size:28px;line-height:28px;color:#0f766e;font-weight:400;white-space:pre;transform:scaleX(1.0635);transform-origin:0 0;-webkit-text-stroke:0.6px #0f766e;">Completed</div>
<div id="t71" style="position:absolute;left:380.0px;top:1605.5px;font-family:'Liberation Mono', monospace;font-size:30px;line-height:30px;color:#0f172a;font-weight:400;white-space:pre;transform:scaleX(0.9304);transform-origin:0 0;">01HRPT19RJSA1019B2GN</div>
<div style="position:absolute;left:839.6px;top:1617.5px;width:14.8px;height:2.6px;background:#64748b;"></div>
<div style="position:absolute;left:1296.4px;top:1593.9px;width:153.3px;height:47.6px;background:#f1f5f9;border-radius:8px;"></div>
<div id="t72" style="position:absolute;left:1304.0px;top:1606.7px;font-family:'Liberation Sans', sans-serif;font-size:24px;line-height:24px;color:#334155;font-weight:400;white-space:pre;transform:scaleX(0.9973);transform-origin:0 0;">lorem: ipsum</div>
<div style="position:absolute;left:1458px;top:1593.9px;width:153.6px;height:47.6px;background:#f1f5f9;border-radius:8px;"></div>
<div id="t73" style="position:absolute;left:1465.4px;top:1606.7px;font-family:'Liberation Sans', sans-serif;font-size:24px;line-height:24px;color:#334155;font-weight:400;white-space:pre;transform:scaleX(0.9973);transform-origin:0 0;">lorem: ipsum</div>
<div id="t74" style="position:absolute;left:1619.5px;top:1606.7px;font-family:'Liberation Sans', sans-serif;font-size:24px;line-height:24px;color:#1e293b;font-weight:400;white-space:pre;transform:scaleX(0.9315);transform-origin:0 0;">+2</div>
<div id="t75" style="position:absolute;left:1754.0px;top:1604.8px;font-family:'Liberation Sans', sans-serif;font-size:28px;line-height:28px;color:#0f172a;font-weight:700;white-space:pre;transform:scaleX(1.0595);transform-origin:0 0;">3/12/24, 9:00:00 AM</div>
<div id="t76" style="position:absolute;left:2212.0px;top:1604.8px;font-family:'Liberation Sans', sans-serif;font-size:28px;line-height:28px;color:#0f172a;font-weight:700;white-space:pre;transform:scaleX(1.0517);transform-origin:0 0;">3/12/24, 9:30:07 AM</div>
<div id="t77" style="position:absolute;left:2670.7px;top:1604.8px;font-family:'Liberation Sans', sans-serif;font-size:28px;line-height:28px;color:#6366f1;font-weight:400;white-space:pre;transform:scaleX(0.9953);transform-origin:0 0;-webkit-text-stroke:0.6px #6366f1;">Email: Reset password</div>
<div id="t78" style="position:absolute;left:3128.0px;top:1604.8px;font-family:'Liberation Sans', sans-serif;font-size:28px;line-height:28px;color:#6366f1;font-weight:400;white-space:pre;transform:scaleX(1.0946);transform-origin:0 0;-webkit-text-stroke:0.6px #6366f1;">growth</div>
<div style="position:absolute;left:132px;top:1760px;width:3454px;height:2px;background:#e2e8f0;"></div>
<div style="position:absolute;left:158px;top:1700.0px;width:28px;height:28px;border-radius:50%;background:#14b8a6;"></div>
<div id="t79" style="position:absolute;left:205.6px;top:1700.8px;font-family:'Liberation Sans', sans-serif;font-size:28px;line-height:28px;color:#0f766e;font-weight:400;white-space:pre;transform:scaleX(1.0635);transform-origin:0 0;-webkit-text-stroke:0.6px #0f766e;">Completed</div>
<div id="t80" style="position:absolute;left:380.0px;top:1701.5px;font-family:'Liberation Mono', monospace;font-size:30px;line-height:30px;color:#0f172a;font-weight:400;white-space:pre;transform:scaleX(0.9304);transform-origin:0 0;">01HRPT19RJSA1019B2GN</div>
<div style="position:absolute;left:839.6px;top:1713.5px;width:14.8px;height:2.6px;background:#64748b;"></div>
<div style="position:absolute;left:1296.4px;top:1689.9px;width:153.3px;height:47.6px;background:#f1f5f9;border-radius:8px;"></div>
<div id="t81" style="position:absolute;left:1304.0px;top:1702.7px;font-family:'Liberation Sans', sans-serif;font-size:24px;line-height:24px;color:#334155;font-weight:400;white-space:pre;transform:scaleX(0.9973);transform-origin:0 0;">lorem: ipsum</div>
<div style="position:absolute;left:1458px;top:1689.9px;width:153.6px;height:47.6px;background:#f1f5f9;border-radius:8px;"></div>
<div id="t82" style="position:absolute;left:1465.4px;top:1702.7px;font-family:'Liberation Sans', sans-serif;font-size:24px;line-height:24px;color:#334155;font-weight:400;white-space:pre;transform:scaleX(0.9973);transform-origin:0 0;">lorem: ipsum</div>
<div id="t83" style="position:absolute;left:1619.5px;top:1702.7px;font-family:'Liberation Sans', sans-serif;font-size:24px;line-height:24px;color:#1e293b;font-weight:400;white-space:pre;transform:scaleX(0.9315);transform-origin:0 0;">+2</div>
<div id="t84" style="position:absolute;left:1754.0px;top:1700.8px;font-family:'Liberation Sans', sans-serif;font-size:28px;line-height:28px;color:#0f172a;font-weight:700;white-space:pre;transform:scaleX(1.0595);transform-origin:0 0;">3/12/24, 9:00:00 AM</div>
<div id="t85" style="position:absolute;left:2212.0px;top:1700.8px;font-family:'Liberation Sans', sans-serif;font-size:28px;line-height:28px;color:#0f172a;font-weight:700;white-space:pre;transform:scaleX(1.0517);transform-origin:0 0;">3/12/24, 9:30:07 AM</div>
<div id="t86" style="position:absolute;left:2670.7px;top:1700.8px;font-family:'Liberation Sans', sans-serif;font-size:28px;line-height:28px;color:#6366f1;font-weight:400;white-space:pre;transform:scaleX(0.9953);transform-origin:0 0;-webkit-text-stroke:0.6px #6366f1;">Email: Reset password</div>
<div id="t87" style="position:absolute;left:3128.0px;top:1700.8px;font-family:'Liberation Sans', sans-serif;font-size:28px;line-height:28px;color:#6366f1;font-weight:400;white-space:pre;transform:scaleX(1.0946);transform-origin:0 0;-webkit-text-stroke:0.6px #6366f1;">growth</div>
<div style="position:absolute;left:132px;top:1856px;width:3454px;height:2px;background:#e2e8f0;"></div>
<div style="position:absolute;left:158px;top:1796.0px;width:28px;height:28px;border-radius:50%;background:#14b8a6;"></div>
<div id="t88" style="position:absolute;left:205.6px;top:1796.8px;font-family:'Liberation Sans', sans-serif;font-size:28px;line-height:28px;color:#0f766e;font-weight:400;white-space:pre;transform:scaleX(1.0635);transform-origin:0 0;-webkit-text-stroke:0.6px #0f766e;">Completed</div>
<div id="t89" style="position:absolute;left:380.0px;top:1797.5px;font-family:'Liberation Mono', monospace;font-size:30px;line-height:30px;color:#0f172a;font-weight:400;white-space:pre;transform:scaleX(0.9304);transform-origin:0 0;">01HRPT19RJSA1019B2GN</div>
<div style="position:absolute;left:839.6px;top:1809.5px;width:14.8px;height:2.6px;background:#64748b;"></div>
<div style="position:absolute;left:1296.4px;top:1785.9px;width:153.3px;height:47.6px;background:#f1f5f9;border-radius:8px;"></div>
<div id="t90" style="position:absolute;left:1304.0px;top:1798.7px;font-family:'Liberation Sans', sans-serif;font-size:24px;line-height:24px;color:#334155;font-weight:400;white-space:pre;transform:scaleX(0.9973);transform-origin:0 0;">lorem: ipsum</div>
<div style="position:absolute;left:1458px;top:1785.9px;width:153.6px;height:47.6px;background:#f1f5f9;border-radius:8px;"></div>
<div id="t91" style="position:absolute;left:1465.4px;top:1798.7px;font-family:'Liberation Sans', sans-serif;font-size:24px;line-height:24px;color:#334155;font-weight:400;white-space:pre;transform:scaleX(0.9973);transform-origin:0 0;">lorem: ipsum</div>
<div id="t92" style="position:absolute;left:1619.5px;top:1798.7px;font-family:'Liberation Sans', sans-serif;font-size:24px;line-height:24px;color:#1e293b;font-weight:400;white-space:pre;transform:scaleX(0.9315);transform-origin:0 0;">+2</div>
<div id="t93" style="position:absolute;left:1754.0px;top:1796.8px;font-family:'Liberation Sans', sans-serif;font-size:28px;line-height:28px;color:#0f172a;font-weight:700;white-space:pre;transform:scaleX(1.0595);transform-origin:0 0;">3/12/24, 9:00:00 AM</div>
<div id="t94" style="position:absolute;left:2212.0px;top:1796.8px;font-family:'Liberation Sans', sans-serif;font-size:28px;line-height:28px;color:#0f172a;font-weight:700;white-space:pre;transform:scaleX(1.0517);transform-origin:0 0;">3/12/24, 9:30:07 AM</div>
<div id="t95" style="position:absolute;left:2670.7px;top:1796.8px;font-family:'Liberation Sans', sans-serif;font-size:28px;line-height:28px;color:#6366f1;font-weight:400;white-space:pre;transform:scaleX(0.9953);transform-origin:0 0;-webkit-text-stroke:0.6px #6366f1;">Email: Reset password</div>
<div id="t96" style="position:absolute;left:3128.0px;top:1796.8px;font-family:'Liberation Sans', sans-serif;font-size:28px;line-height:28px;color:#6366f1;font-weight:400;white-space:pre;transform:scaleX(1.0946);transform-origin:0 0;-webkit-text-stroke:0.6px #6366f1;">growth</div>
<div style="position:absolute;left:132px;top:1952px;width:3454px;height:2px;background:#e2e8f0;"></div>
<div style="position:absolute;left:162px;top:1892.0px;width:28px;height:28px;border-radius:50%;background:#bfdbfe;box-sizing:border-box;border:2.4px solid #0ea5e9;"></div>
<div id="t97" style="position:absolute;left:210.2px;top:1892.8px;font-family:'Liberation Sans', sans-serif;font-size:28px;line-height:28px;color:#0ea5e9;font-weight:400;white-space:pre;transform:scaleX(1.0066);transform-origin:0 0;-webkit-text-stroke:0.6px #0ea5e9;">Running</div>
<div id="t98" style="position:absolute;left:380.0px;top:1893.5px;font-family:'Liberation Mono', monospace;font-size:30px;line-height:30px;color:#0f172a;font-weight:400;white-space:pre;transform:scaleX(0.9304);transform-origin:0 0;">01HRPT19RJSA1019B2GN</div>
<div style="position:absolute;left:839.6px;top:1905.5px;width:14.8px;height:2.6px;background:#64748b;"></div>
<div style="position:absolute;left:1296.4px;top:1881.9px;width:153.3px;height:47.6px;background:#f1f5f9;border-radius:8px;"></div>
<div id="t99" style="position:absolute;left:1304.0px;top:1894.7px;font-family:'Liberation Sans', sans-serif;font-size:24px;line-height:24px;color:#334155;font-weight:400;white-space:pre;transform:scaleX(0.9973);transform-origin:0 0;">lorem: ipsum</div>
<div id="t100" style="position:absolute;left:1754.0px;top:1892.8px;font-family:'Liberation Sans', sans-serif;font-size:28px;line-height:28px;color:#0f172a;font-weight:700;white-space:pre;transform:scaleX(1.0595);transform-origin:0 0;">3/12/24, 9:00:00 AM</div>
<div style="position:absolute;left:2212.9px;top:1905.5px;width:15.4px;height:2.6px;background:#64748b;"></div>
<div id="t101" style="position:absolute;left:2670.7px;top:1892.8px;font-family:'Liberation Sans', sans-serif;font-size:28px;line-height:28px;color:#6366f1;font-weight:400;white-space:pre;transform:scaleX(1.0259);transform-origin:0 0;-webkit-text-stroke:0.6px #6366f1;">Event batch test</div>
<div id="t102" style="position:absolute;left:3128.0px;top:1892.8px;font-family:'Liberation Sans', sans-serif;font-size:28px;line-height:28px;color:#6366f1;font-weight:400;white-space:pre;transform:scaleX(1.0298);transform-origin:0 0;-webkit-text-stroke:0.6px #6366f1;">Inngest</div>
<div style="position:absolute;left:132px;top:2048px;width:3454px;height:2px;background:#e2e8f0;"></div>
<div style="position:absolute;left:162px;top:1988.0px;width:28px;height:28px;border-radius:50%;background:#bfdbfe;box-sizing:border-box;border:2.4px solid #0ea5e9;"></div>
<div id="t103" style="position:absolute;left:210.2px;top:1988.8px;font-family:'Liberation Sans', sans-serif;font-size:28px;line-height:28px;color:#0ea5e9;font-weight:400;white-space:pre;transform:scaleX(1.0066);transform-origin:0 0;-webkit-text-stroke:0.6px #0ea5e9;">Running</div>
<div id="t104" style="position:absolute;left:380.0px;top:1989.5px;font-family:'Liberation Mono', monospace;font-size:30px;line-height:30px;color:#0f172a;font-weight:400;white-space:pre;transform:scaleX(0.9304);transform-origin:0 0;">01HRPT19RJSA1019B2GN</div>
<div style="position:absolute;left:839.6px;top:2001.5px;width:14.8px;height:2.6px;background:#64748b;"></div>
<div style="position:absolute;left:1296.4px;top:1977.9px;width:153.3px;height:47.6px;background:#f1f5f9;border-radius:8px;"></div>
<div id="t105" style="position:absolute;left:1304.0px;top:1990.7px;font-family:'Liberation Sans', sans-serif;font-size:24px;line-height:24px;color:#334155;font-weight:400;white-space:pre;transform:scaleX(0.9973);transform-origin:0 0;">lorem: ipsum</div>
<div id="t106" style="position:absolute;left:1754.0px;top:1988.8px;font-family:'Liberation Sans', sans-serif;font-size:28px;line-height:28px;color:#0f172a;font-weight:700;white-space:pre;transform:scaleX(1.0595);transform-origin:0 0;">3/12/24, 9:00:00 AM</div>
<div style="position:absolute;left:2212.9px;top:2001.5px;width:15.4px;height:2.6px;background:#64748b;"></div>
<div id="t107" style="position:absolute;left:2670.7px;top:1988.8px;font-family:'Liberation Sans', sans-serif;font-size:28px;line-height:28px;color:#6366f1;font-weight:400;white-space:pre;transform:scaleX(1.0361);transform-origin:0 0;-webkit-text-stroke:0.6px #6366f1;">Marketing: Add new si...</div>
<div id="t108" style="position:absolute;left:3128.0px;top:1988.8px;font-family:'Liberation Sans', sans-serif;font-size:28px;line-height:28px;color:#6366f1;font-weight:400;white-space:pre;transform:scaleX(1.0298);transform-origin:0 0;-webkit-text-stroke:0.6px #6366f1;">Inngest</div>
<div style="position:absolute;left:132px;top:2144px;width:3454px;height:2px;background:#e2e8f0;"></div>
<div style="position:absolute;left:162px;top:2084.0px;width:28px;height:28px;border-radius:50%;background:#fef3c7;box-sizing:border-box;border:2.4px solid #f59e0b;"></div>
<div id="t109" style="position:absolute;left:210.1px;top:2084.8px;font-family:'Liberation Sans', sans-serif;font-size:28px;line-height:28px;color:#f59e0b;font-weight:400;white-space:pre;transform:scaleX(1.0237);transform-origin:0 0;-webkit-text-stroke:0.6px #f59e0b;">Queued</div>
<div id="t110" style="position:absolute;left:380.0px;top:2085.5px;font-family:'Liberation Mono', monospace;font-size:30px;line-height:30px;color:#0f172a;font-weight:400;white-space:pre;transform:scaleX(0.9304);transform-origin:0 0;">01HRPT19RJSA1019B2GN</div>
<div style="position:absolute;left:839.6px;top:2097.5px;width:14.8px;height:2.6px;background:#64748b;"></div>
<div style="position:absolute;left:1296.4px;top:2073.9px;width:153.3px;height:47.6px;background:#f1f5f9;border-radius:8px;"></div>
<div id="t111" style="position:absolute;left:1304.0px;top:2086.7px;font-family:'Liberation Sans', sans-serif;font-size:24px;line-height:24px;color:#334155;font-weight:400;white-space:pre;transform:scaleX(0.9973);transform-origin:0 0;">lorem: ipsum</div>
<div style="position:absolute;left:1458px;top:2073.9px;width:153.6px;height:47.6px;background:#f1f5f9;border-radius:8px;"></div>
<div id="t112" style="position:absolute;left:1465.4px;top:2086.7px;font-family:'Liberation Sans', sans-serif;font-size:24px;line-height:24px;color:#334155;font-weight:400;white-space:pre;transform:scaleX(0.9973);transform-origin:0 0;">lorem: ipsum</div>
<div id="t113" style="position:absolute;left:1619.5px;top:2086.7px;font-family:'Liberation Sans', sans-serif;font-size:24px;line-height:24px;color:#1e293b;font-weight:400;white-space:pre;transform:scaleX(0.9315);transform-origin:0 0;">+2</div>
<div id="t114" style="position:absolute;left:1754.0px;top:2084.8px;font-family:'Liberation Sans', sans-serif;font-size:28px;line-height:28px;color:#0f172a;font-weight:700;white-space:pre;transform:scaleX(1.0595);transform-origin:0 0;">3/12/24, 9:00:00 AM</div>
<div style="position:absolute;left:2212.9px;top:2097.5px;width:15.4px;height:2.6px;background:#64748b;"></div>
<div id="t115" style="position:absolute;left:2670.7px;top:2084.8px;font-family:'Liberation Sans', sans-serif;font-size:28px;line-height:28px;color:#6366f1;font-weight:400;white-space:pre;transform:scaleX(0.9953);transform-origin:0 0;-webkit-text-stroke:0.6px #6366f1;">Email: Reset password</div>
<div id="t116" style="position:absolute;left:3128.0px;top:2084.8px;font-family:'Liberation Sans', sans-serif;font-size:28px;line-height:28px;color:#6366f1;font-weight:400;white-space:pre;transform:scaleX(1.0946);transform-origin:0 0;-webkit-text-stroke:0.6px #6366f1;">growth</div>
<div style="position:absolute;left:132px;top:2240px;width:3454px;height:2px;background:#e2e8f0;"></div>
<div style="position:absolute;left:162px;top:2180.0px;width:28px;height:28px;border-radius:50%;background:#cbd5e1;"></div>
<div id="t117" style="position:absolute;left:210.1px;top:2180.8px;font-family:'Liberation Sans', sans-serif;font-size:28px;line-height:28px;color:#4b4b4b;font-weight:400;white-space:pre;transform:scaleX(1.0359);transform-origin:0 0;-webkit-text-stroke:0.6px #4b4b4b;">Cancelled</div>
<div id="t118" style="position:absolute;left:380.0px;top:2181.5px;font-family:'Liberation Mono', monospace;font-size:30px;line-height:30px;color:#0f172a;font-weight:400;white-space:pre;transform:scaleX(0.9304);transform-origin:0 0;">01HRPT19RJSA1019B2GN</div>
<div style="position:absolute;left:839.6px;top:2193.5px;width:14.8px;height:2.6px;background:#64748b;"></div>
<div style="position:absolute;left:1296.4px;top:2169.9px;width:153.3px;height:47.6px;background:#f1f5f9;border-radius:8px;"></div>
<div id="t119" style="position:absolute;left:1304.0px;top:2182.7px;font-family:'Liberation Sans', sans-serif;font-size:24px;line-height:24px;color:#334155;font-weight:400;white-space:pre;transform:scaleX(0.9973);transform-origin:0 0;">lorem: ipsum</div>
<div id="t120" style="position:absolute;left:1754.0px;top:2180.8px;font-family:'Liberation Sans', sans-serif;font-size:28px;line-height:28px;color:#0f172a;font-weight:700;white-space:pre;transform:scaleX(1.0595);transform-origin:0 0;">3/12/24, 9:00:00 AM</div>
<div style="position:absolute;left:2212.9px;top:2193.5px;width:15.4px;height:2.6px;background:#64748b;"></div>
<div id="t121" style="position:absolute;left:2670.7px;top:2180.8px;font-family:'Liberation Sans', sans-serif;font-size:28px;line-height:28px;color:#6366f1;font-weight:400;white-space:pre;transform:scaleX(1.0233);transform-origin:0 0;-webkit-text-stroke:0.6px #6366f1;">Email: Onboarding dri...</div>
<div id="t122" style="position:absolute;left:3128.0px;top:2180.8px;font-family:'Liberation Sans', sans-serif;font-size:28px;line-height:28px;color:#6366f1;font-weight:400;white-space:pre;transform:scaleX(1.0946);transform-origin:0 0;-webkit-text-stroke:0.6px #6366f1;">growth</div>
</div>
<script>
(function(){var w=window.innerWidth;if(w&&Math.abs(w-3586)>4){var r=document.getElementById('root');var s=w/3586;r.style.transformOrigin='0 0';r.style.transform='scale('+s+')';}})();
</script>
</body></html>
